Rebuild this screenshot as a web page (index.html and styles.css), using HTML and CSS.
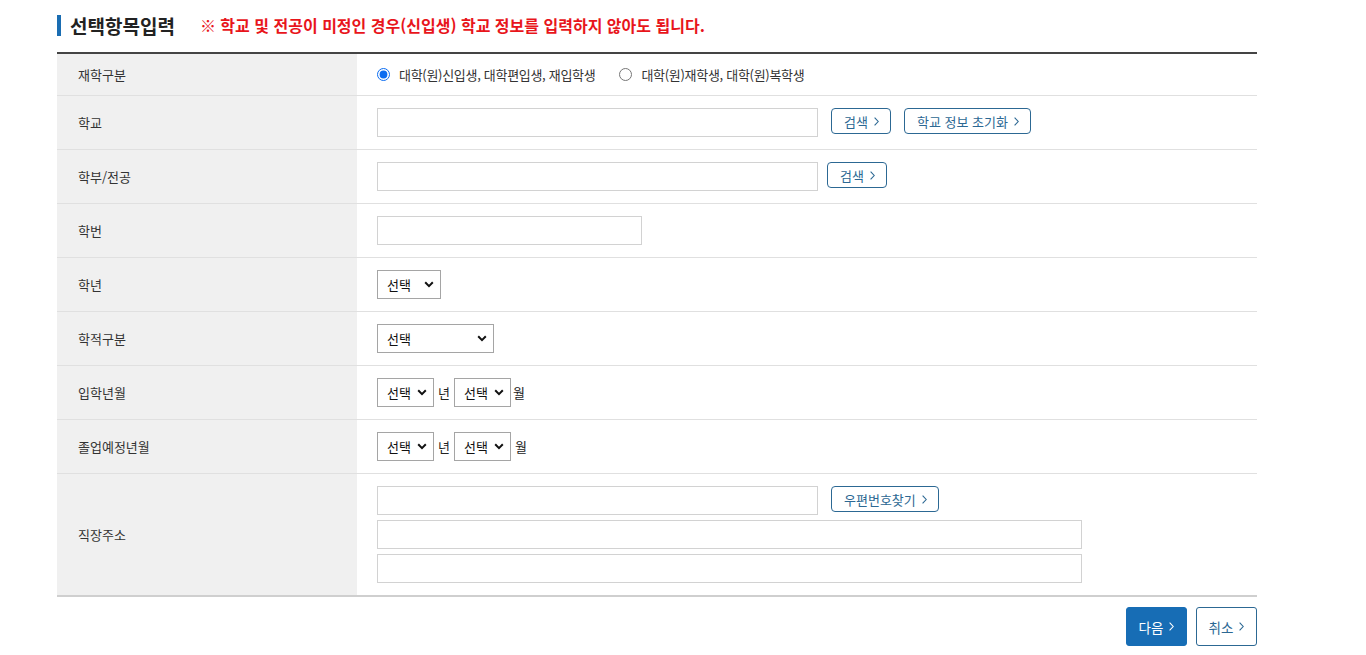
FILE: index.html
```html
<!DOCTYPE html>
<html lang="ko">
<head>
<meta charset="utf-8">
<title>선택항목입력</title>
<link rel="stylesheet" href="styles.css">
</head>
<body>
<div class="wrap">
  <h2 class="title">
    <span class="ttl">선택항목입력</span>
    <span class="notice">※ 학교 및 전공이 미정인 경우(신입생) 학교 정보를 입력하지 않아도 됩니다.</span>
  </h2>

  <div class="form">
    <div class="lab r1">재학구분</div>
    <div class="val r1">
      <label class="radio"><input type="radio" name="st" checked><span>대학(원)신입생, 대학편입생, 재입학생</span></label>
      <label class="radio second"><input type="radio" name="st"><span>대학(원)재학생, 대학(원)복학생</span></label>
    </div>

    <div class="lab">학교</div>
    <div class="val">
      <input type="text" class="inp w440">
      <button class="obtn ml13" type="button">검색<svg class="chev" viewBox="0 0 5 9"><polyline points="0.6,0.6 4.2,4.5 0.6,8.4"/></svg></button>
      <button class="obtn ml13" type="button">학교 정보 초기화<svg class="chev" viewBox="0 0 5 9"><polyline points="0.6,0.6 4.2,4.5 0.6,8.4"/></svg></button>
    </div>

    <div class="lab">학부/전공</div>
    <div class="val">
      <input type="text" class="inp w440">
      <button class="obtn ml9" type="button">검색<svg class="chev" viewBox="0 0 5 9"><polyline points="0.6,0.6 4.2,4.5 0.6,8.4"/></svg></button>
    </div>

    <div class="lab">학번</div>
    <div class="val">
      <input type="text" class="inp w264">
    </div>

    <div class="lab">학년</div>
    <div class="val">
      <select class="sel w64"><option>선택</option></select>
    </div>

    <div class="lab">학적구분</div>
    <div class="val">
      <select class="sel w117"><option>선택</option></select>
    </div>

    <div class="lab">입학년월</div>
    <div class="val">
      <select class="sel w57"><option>선택</option></select>
      <span class="unit">년</span>
      <select class="sel w57"><option>선택</option></select>
      <span class="unit tight">월</span>
    </div>

    <div class="lab">졸업예정년월</div>
    <div class="val">
      <select class="sel w57"><option>선택</option></select>
      <span class="unit">년</span>
      <select class="sel w57"><option>선택</option></select>
      <span class="unit">월</span>
    </div>

    <div class="lab last">직장주소</div>
    <div class="val last addr">
      <div class="line">
        <input type="text" class="inp w440">
        <button class="obtn ml13" type="button">우편번호찾기<svg class="chev" viewBox="0 0 5 9"><polyline points="0.6,0.6 4.2,4.5 0.6,8.4"/></svg></button>
      </div>
      <input type="text" class="inp w704">
      <input type="text" class="inp w704">
    </div>
  </div>

  <div class="actions">
    <button class="bbtn primary" type="button">다음<svg class="chev" viewBox="0 0 5 9"><polyline points="0.6,0.6 4.2,4.5 0.6,8.4"/></svg></button>
    <button class="bbtn" type="button">취소<svg class="chev" viewBox="0 0 5 9"><polyline points="0.6,0.6 4.2,4.5 0.6,8.4"/></svg></button>
  </div>
</div>
</body>
</html>
```

FILE: styles.css
```css
* { box-sizing: border-box; }

html, body {
  margin: 0;
  padding: 0;
  background: #fff;
}

body {
  font-family: "Noto Sans CJK KR", "Noto Sans", sans-serif;
  color: #333;
  font-size: 13px;
}

.wrap {
  width: 1200px;
  margin-left: 57px;
}

.title {
  display: flex;
  align-items: center;
  margin: 0;
  padding-top: 15px;
  height: 36px;
}

.ttl {
  display: block;
  border-left: 4px solid #1a6db2;
  padding-left: 9px;
  height: 21px;
  line-height: 21px;
  font-size: 19px;
  font-weight: 700;
  color: #222;
}

.notice {
  margin-left: 25px;
  font-size: 16px;
  font-weight: 700;
  color: #e8151b;
  line-height: 21px;
}

.form {
  margin-top: 16px;
  display: grid;
  grid-template-columns: 300px 900px;
  border-top: 2px solid #444;
  border-bottom: 2px solid #cfcfcf;
}

.lab, .val {
  height: 54px;
  border-bottom: 1px solid #e0e0e0;
  display: flex;
  align-items: center;
}

.lab {
  background: #f0f0f0;
  padding-left: 21px;
  font-size: 13px;
  color: #333;
}

.val {
  padding-left: 20px;
}

.r1 { height: 42px; }

.last {
  height: 121px;
  border-bottom: 0;
}

.addr {
  flex-direction: column;
  align-items: flex-start;
  justify-content: center;
  gap: 5px;
}

.line {
  display: flex;
  align-items: center;
}

.radio {
  display: flex;
  align-items: center;
  font-size: 13px;
  color: #333;
  letter-spacing: -0.3px;
}

.radio input {
  margin: 0 9px 0 0;
  width: 13px;
  height: 13px;
  accent-color: #0b6cf0;
}

.radio.second { margin-left: 24px; }

.inp {
  height: 29px;
  border: 1px solid #d2d2d2;
  background: #fff;
  margin: 0;
  padding: 0 6px;
}

.w440 { width: 441px; }
.w264 { width: 265px; }
.w704 { width: 705px; }

.obtn {
  display: inline-flex;
  align-items: center;
  height: 26px;
  margin-bottom: 3px;
  padding: 0 11px 0 12px;
  border: 1px solid #2c6893;
  border-radius: 4px;
  background: #fff;
  color: #2c6893;
  font-family: "Noto Sans CJK KR", "Noto Sans", sans-serif;
  font-size: 13px;
  cursor: pointer;
}

.ml13 { margin-left: 13px; }
.ml9 { margin-left: 9px; }

.chev {
  width: 5px;
  height: 9px;
  margin-left: 6px;
  fill: none;
  stroke: currentColor;
  stroke-width: 1.1;
}

.sel {
  appearance: none;
  -webkit-appearance: none;
  height: 29px;
  border: 1px solid #a5a5a5;
  border-radius: 0;
  background: #fff url("data:image/svg+xml,%3Csvg xmlns='http://www.w3.org/2000/svg' width='10' height='7' viewBox='0 0 10 7'%3E%3Cpolyline points='1.2,1.3 5,5.1 8.8,1.3' fill='none' stroke='%23111' stroke-width='2'/%3E%3C/svg%3E") no-repeat right 6px center;
  padding: 0 0 0 9px;
  font-family: "Noto Sans CJK KR", "Noto Sans", sans-serif;
  font-size: 13px;
  color: #111;
  margin: 0;
}

.w64 { width: 64px; }
.w117 { width: 117px; }
.w57 { width: 57px; }

.unit {
  margin: 0 4px;
  font-size: 13px;
  color: #222;
}

.unit.tight { margin-right: 0; margin-left: 2px; }

.actions {
  display: flex;
  justify-content: flex-end;
  gap: 9px;
  margin-top: 10px;
}

.bbtn {
  display: inline-flex;
  align-items: center;
  justify-content: center;
  width: 61px;
  height: 39px;
  border: 1px solid #2c6893;
  border-radius: 3px;
  background: #fff;
  color: #2c6893;
  font-family: "Noto Sans CJK KR", "Noto Sans", sans-serif;
  font-size: 13.5px;
  padding: 0;
  cursor: pointer;
}

.bbtn.primary {
  background: #176db5;
  border-color: #176db5;
  color: #fff;
}
```
